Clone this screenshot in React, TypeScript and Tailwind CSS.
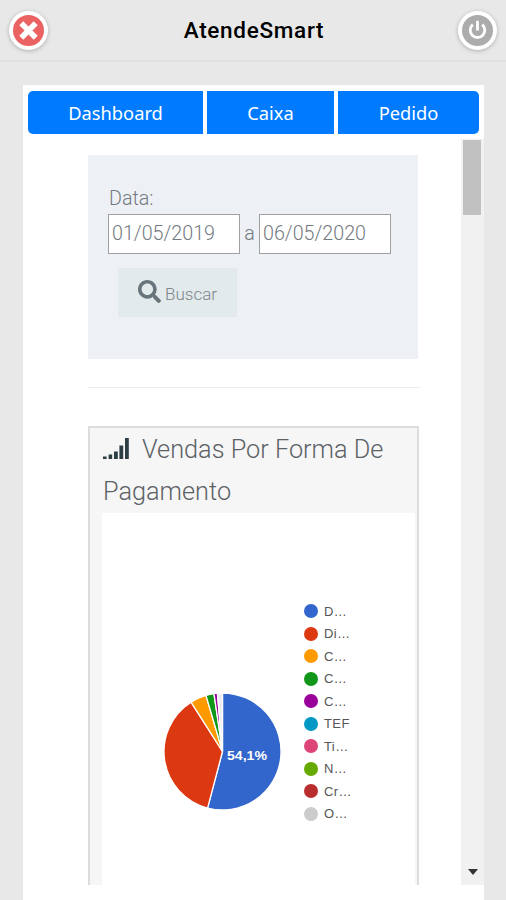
import { FaSearch } from "react-icons/fa";

const legend = [
  { label: "D…", dot: "bg-[#3366cc]" },
  { label: "Di…", dot: "bg-[#dc3912]" },
  { label: "C…", dot: "bg-[#ff9900]" },
  { label: "C…", dot: "bg-[#109618]" },
  { label: "C…", dot: "bg-[#990099]" },
  { label: "TEF", dot: "bg-[#0099c6]" },
  { label: "Ti…", dot: "bg-[#dd4477]" },
  { label: "N…", dot: "bg-[#66aa00]" },
  { label: "Cr…", dot: "bg-[#b82e2e]" },
  { label: "O…", dot: "bg-[#cccccc]" },
];

// start and end in degrees, clockwise from the top
const slices = [
  { from: 0, to: 194.8, color: "#3366cc" },
  { from: 194.8, to: 327.5, color: "#dc3912" },
  { from: 327.5, to: 343.6, color: "#ff9900" },
  { from: 343.6, to: 351.6, color: "#109618" },
  { from: 351.6, to: 355, color: "#990099" },
  { from: 355, to: 360, color: "#ececf4" },
];

function slicePath(from: number, to: number) {
  const r = 58.5;
  const point = (deg: number) => {
    const a = (deg * Math.PI) / 180;
    return `${(59.5 + r * Math.sin(a)).toFixed(2)} ${(60.5 - r * Math.cos(a)).toFixed(2)}`;
  };
  return `M59.5 60.5 L${point(from)} A${r} ${r} 0 ${to - from > 180 ? 1 : 0} 1 ${point(to)} Z`;
}

function Pie() {
  return (
    <svg width="120" height="120" viewBox="0 0 120 120">
      {slices.map((s) => (
        <path key={s.from} d={slicePath(s.from, s.to)} fill={s.color} stroke="#fff" strokeWidth="1.3" />
      ))}
      <text x="64" y="68.5" fill="#fff" fontSize="13" fontWeight="bold" fontFamily="Liberation Sans, sans-serif" textLength="40" lengthAdjust="spacingAndGlyphs">
        54,1%
      </text>
    </svg>
  );
}

function Header() {
  return (
    <header className="flex h-[62px] items-center justify-between border-b-2 border-[#e0e0e0] px-[9px]">
      <button className="flex size-[39px] items-center justify-center rounded-full bg-white shadow-[0_1px_4px_rgba(0,0,0,0.25)]">
        <svg width="31" height="31" viewBox="0 0 31 31">
          <circle cx="15.5" cy="15.5" r="15.5" fill="#ea6262" />
          <path d="M8.3 8.3 L22.7 22.7 M22.7 8.3 L8.3 22.7" stroke="#fff" strokeWidth="5.6" />
        </svg>
      </button>
      <h1 className="pt-[2px] pl-[2px] text-[22.5px] font-medium tracking-[0.7px] text-black font-['Roboto',sans-serif]">AtendeSmart</h1>
      <button className="flex size-[39px] items-center justify-center rounded-full bg-white shadow-[0_1px_4px_rgba(0,0,0,0.25)]">
        <svg width="31" height="31" viewBox="0 0 31 31" fill="none" stroke="#fff" strokeWidth="2.8">
          <circle cx="15.5" cy="15.5" r="15.5" fill="#acacac" stroke="none" />
          <path d="M10.8 9.6 A7.3 7.3 0 1 0 20.2 9.6" />
          <path d="M15.5 5.8 V15.5" />
        </svg>
      </button>
    </header>
  );
}

export default function App() {
  return (
    <div className="flex h-[900px] w-[506px] flex-col overflow-hidden bg-[#e8e8e8] font-['Roboto',sans-serif]">
      <Header />
      <main className="mt-[23px] ml-[23px] flex w-[461px] flex-1 flex-col bg-white">
        <nav className="mt-[6px] ml-[5px] flex h-[43px] gap-[4px] text-[18.3px] text-white font-['Noto_Sans',sans-serif]">
          <button className="w-[175px] rounded-l-[5px] bg-[#007bff] pt-px">Dashboard</button>
          <button className="w-[127px] bg-[#007bff] pt-px">Caixa</button>
          <button className="w-[141px] rounded-r-[5px] bg-[#007bff] pt-px">Pedido</button>
        </nav>

        <div className="mt-[5px] flex h-[746px] justify-between overflow-hidden">
          <div className="ml-[65px] w-[333px] pt-4">
            <section className="h-[204px] w-[330px] bg-[#edf1f6] pt-[29px] pl-5 text-[19.7px] font-light text-[#737a81]">
              <p className="h-[30px] pl-px leading-[30px]">Data:</p>
              <div className="flex h-[40px] items-center">
                <div className="h-[40px] w-[132px] border border-[#a0a0a0] bg-white pl-[3px] leading-[38px]">01/05/2019</div>
                <span className="w-[19px] text-center">a</span>
                <div className="h-[40px] w-[132px] border border-[#a0a0a0] bg-white pl-[3px] leading-[38px]">06/05/2020</div>
              </div>
              <button className="mt-[14px] ml-[10px] flex h-[49px] w-[119px] items-center bg-[#e3eaec] pl-[20px] text-[17px] text-[#7c858b]">
                <FaSearch className="mb-[2px] size-[23px] text-[#68747c]" />
                <span className="ml-[4px] pt-[4px]">Buscar</span>
              </button>
            </section>

            <hr className="mt-[28px] border-[#eeeeee]" />

            <section className="mt-[38px] h-[500px] w-[331px] border-2 border-[#dddddd] bg-[#f6f6f6] pr-[2px] pl-[12px]">
              <h2 className="h-[85px] pt-px pl-px text-[25.3px] leading-[42px] font-light text-[#5c6266]">
                <svg className="mr-[13px] inline-block align-[-1px]" width="26" height="21" viewBox="0 0 26 21" fill="#2c3e44">
                  <path d="M0 18.5h3.6v2.5H0z M5.6 16.5h3.6v4.5H5.6z M11 13.5h3.8v7.5H11z M16.4 7.5h3.8v13.5h-3.8z M22 0h3.8v21H22z" />
                </svg>
                Vendas Por Forma De Pagamento
              </h2>
              <div className="flex h-[420px] bg-white">
                <div className="mt-[178px] ml-[61px]">
                  <Pie />
                </div>
                <ul className="mt-[87px] ml-[21px] text-[13px] tracking-[0.4px] text-[#555555] font-['Liberation_Sans',sans-serif]">
                  {legend.map((item, i) => (
                    <li key={i} className="flex h-[22.5px] items-center">
                      <span className={`mr-[6px] size-[14px] rounded-full ${item.dot}`} />
                      {item.label}
                    </li>
                  ))}
                </ul>
              </div>
            </section>
          </div>

          <div className="flex w-[23px] flex-col items-center justify-between bg-[#f1f1f1] pt-px pb-[10px]">
            <div className="mr-px h-[75px] w-[18px] bg-[#c1c1c1]" />
            <svg width="10" height="6" viewBox="0 0 10 6">
              <path d="M0 0h10L5 6z" fill="#333" />
            </svg>
          </div>
        </div>
      </main>
    </div>
  );
}
